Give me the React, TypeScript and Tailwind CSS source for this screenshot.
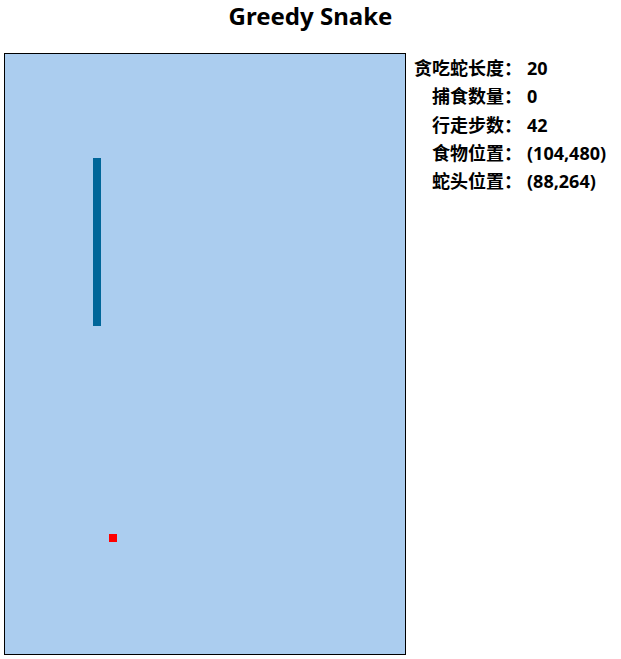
const stats: [string, string][] = [
  ["贪吃蛇长度：", "20"],
  ["捕食数量：", "0"],
  ["行走步数：", "42"],
  ["食物位置：", "(104,480)"],
  ["蛇头位置：", "(88,264)"],
];

export default function App() {
  return (
    <div className="w-[621px] h-[659px] bg-white text-black font-['Noto_Sans','Noto_Sans_CJK_SC',sans-serif]">
      <h1 className="h-[53px] pb-[22px] flex items-center justify-center text-[24px] font-bold leading-[32px]">
        Greedy Snake
      </h1>
      <div className="flex items-start pl-1">
        <div className="relative w-[402px] h-[602px] border border-black bg-[#abcdef]">
          <div className="absolute left-[88px] top-[104px] w-2 h-[168px] bg-[#006699]" />
          <div className="absolute left-[104px] top-[480px] w-2 h-2 bg-[#ff0000]" />
        </div>
        <div className="ml-2 mt-[1px] grid grid-cols-[auto_auto] gap-x-[5px] text-[18px] font-bold leading-[28.25px]">
          {stats.map(([k, v]) => (
            <div key={k} className="contents">
              <span className="text-right">{k}</span>
              <span>{v}</span>
            </div>
          ))}
        </div>
      </div>
    </div>
  );
}
